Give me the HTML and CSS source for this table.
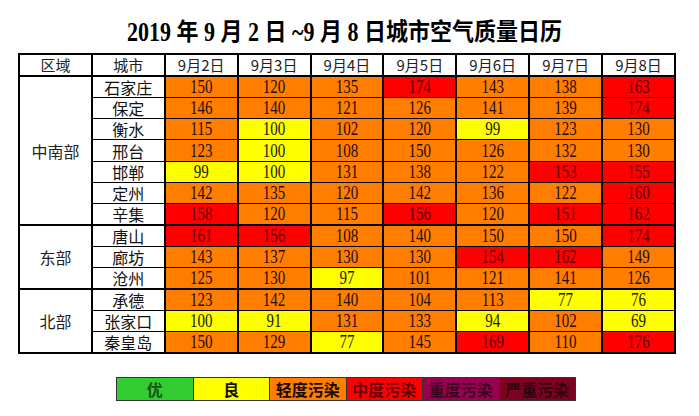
FILE: index.html
```html
<!DOCTYPE html>
<html lang="zh-CN">
<head>
<meta charset="utf-8">
<title>2019年9月2日~9月8日城市空气质量日历</title>
<link rel="stylesheet" href="styles.css">
</head>
<body>
<h1 class="title"><span class="title-text"><span class="num">2019</span> 年 <span class="num">9</span> 月 <span class="num">2</span> 日 <span class="num">~9</span> 月 <span class="num">8</span> 日城市空气质量日历</span></h1>
<table class="aqi">
  <colgroup>
    <col><col><col><col><col><col><col><col><col>
  </colgroup>
  <thead>
    <tr class="head">
      <th>区域</th><th>城市</th><th>9月2日</th><th>9月3日</th><th>9月4日</th><th>9月5日</th><th>9月6日</th><th>9月7日</th><th>9月8日</th>
    </tr>
  </thead>
  <tbody class="group">
    <tr>
      <td class="region" rowspan="7">中南部</td><td class="city">石家庄</td>
      <td class="o"><span>150</span></td><td class="o"><span>120</span></td><td class="o"><span>135</span></td><td class="r"><span>174</span></td><td class="o"><span>143</span></td><td class="o"><span>138</span></td><td class="r"><span>163</span></td>
    </tr>
    <tr>
      <td class="city">保定</td>
      <td class="o"><span>146</span></td><td class="o"><span>140</span></td><td class="o"><span>121</span></td><td class="o"><span>126</span></td><td class="o"><span>141</span></td><td class="o"><span>139</span></td><td class="r"><span>174</span></td>
    </tr>
    <tr>
      <td class="city">衡水</td>
      <td class="o"><span>115</span></td><td class="y"><span>100</span></td><td class="o"><span>102</span></td><td class="o"><span>120</span></td><td class="y"><span>99</span></td><td class="o"><span>123</span></td><td class="o"><span>130</span></td>
    </tr>
    <tr>
      <td class="city">邢台</td>
      <td class="o"><span>123</span></td><td class="y"><span>100</span></td><td class="o"><span>108</span></td><td class="o"><span>150</span></td><td class="o"><span>126</span></td><td class="o"><span>132</span></td><td class="o"><span>130</span></td>
    </tr>
    <tr>
      <td class="city">邯郸</td>
      <td class="y"><span>99</span></td><td class="y"><span>100</span></td><td class="o"><span>131</span></td><td class="o"><span>138</span></td><td class="o"><span>122</span></td><td class="r"><span>153</span></td><td class="r"><span>155</span></td>
    </tr>
    <tr>
      <td class="city">定州</td>
      <td class="o"><span>142</span></td><td class="o"><span>135</span></td><td class="o"><span>120</span></td><td class="o"><span>142</span></td><td class="o"><span>136</span></td><td class="o"><span>122</span></td><td class="r"><span>160</span></td>
    </tr>
    <tr>
      <td class="city">辛集</td>
      <td class="r"><span>158</span></td><td class="o"><span>120</span></td><td class="o"><span>115</span></td><td class="r"><span>156</span></td><td class="o"><span>120</span></td><td class="r"><span>151</span></td><td class="r"><span>162</span></td>
    </tr>
  </tbody>
  <tbody class="group">
    <tr>
      <td class="region" rowspan="3">东部</td><td class="city">唐山</td>
      <td class="r"><span>161</span></td><td class="r"><span>156</span></td><td class="o"><span>108</span></td><td class="o"><span>140</span></td><td class="o"><span>150</span></td><td class="o"><span>150</span></td><td class="r"><span>174</span></td>
    </tr>
    <tr>
      <td class="city">廊坊</td>
      <td class="o"><span>143</span></td><td class="o"><span>137</span></td><td class="o"><span>130</span></td><td class="o"><span>130</span></td><td class="r"><span>154</span></td><td class="r"><span>162</span></td><td class="o"><span>149</span></td>
    </tr>
    <tr>
      <td class="city">沧州</td>
      <td class="o"><span>125</span></td><td class="o"><span>130</span></td><td class="y"><span>97</span></td><td class="o"><span>101</span></td><td class="o"><span>121</span></td><td class="o"><span>141</span></td><td class="o"><span>126</span></td>
    </tr>
  </tbody>
  <tbody class="group">
    <tr>
      <td class="region" rowspan="3">北部</td><td class="city">承德</td>
      <td class="o"><span>123</span></td><td class="o"><span>142</span></td><td class="o"><span>140</span></td><td class="o"><span>104</span></td><td class="o"><span>113</span></td><td class="y"><span>77</span></td><td class="y"><span>76</span></td>
    </tr>
    <tr>
      <td class="city">张家口</td>
      <td class="y"><span>100</span></td><td class="y"><span>91</span></td><td class="o"><span>131</span></td><td class="o"><span>133</span></td><td class="y"><span>94</span></td><td class="o"><span>102</span></td><td class="y"><span>69</span></td>
    </tr>
    <tr>
      <td class="city">秦皇岛</td>
      <td class="o"><span>150</span></td><td class="o"><span>129</span></td><td class="y"><span>77</span></td><td class="o"><span>145</span></td><td class="r"><span>169</span></td><td class="o"><span>110</span></td><td class="r"><span>176</span></td>
    </tr>
  </tbody>
</table>
<div class="legend">
  <div class="key k-good">优</div>
  <div class="key k-moderate">良</div>
  <div class="key k-light">轻度污染</div>
  <div class="key k-medium">中度污染</div>
  <div class="key k-heavy">重度污染</div>
  <div class="key k-severe">严重污染</div>
</div>
</body>
</html>
```
FILE: styles.css
```css
html, body {
  margin: 0;
  padding: 0;
  background: #ffffff;
}

body {
  width: 699px;
  height: 416px;
  overflow: hidden;
  font-family: "Noto Sans CJK SC", sans-serif;
  color: #111;
}

.title {
  margin: 0;
  height: 53px;
  box-sizing: border-box;
  padding: 19px 10px 0 0;
  text-align: center;
  font-family: "Liberation Serif", "Noto Sans CJK SC", serif;
  font-size: 22px;
  line-height: 26px;
  font-weight: 700;
  color: #000;
  white-space: pre;
}

.title-text {
  display: inline-block;
  transform: scaleY(1.1);
}

.title .num {
  display: inline-block;
  transform: scaleY(1.12);
}

.aqi {
  margin-left: 18px;
  width: 658px;
  table-layout: fixed;
  border-collapse: collapse;
  border: 2px solid #000;
}

.aqi th,
.aqi td {
  padding: 0;
  border: 1px solid #000;
  border-left-width: 2px;
  border-right-width: 2px;
  text-align: center;
  vertical-align: middle;
  white-space: nowrap;
}

.aqi .head {
  height: 22px;
}

.aqi th {
  font-weight: 400;
  font-size: 15px;
  line-height: 18px;
  color: #222;
  background: #fff;
}

.aqi tbody tr {
  height: 21.3px;
}

.group {
  border-top: 2px solid #000;
}

.region {
  font-size: 16px;
  line-height: 18px;
  color: #222;
  background: #fff;
}

.city {
  font-size: 16px;
  line-height: 18px;
  color: #111;
  background: #fff;
}

.o, .y, .r {
  font-family: "Liberation Serif", serif;
  font-size: 15px;
  line-height: 18px;
}

.o span, .y span, .r span {
  display: inline-block;
  transform: scaleY(1.2);
}

.o {
  background: #ff7e00;
  color: #1e0c00;
}

.y {
  background: #ffff00;
  color: #1a1a00;
}

.r {
  background: #ff0000;
  color: #5c0000;
}

.legend {
  display: flex;
  margin: 23px 0 0 116px;
  width: 460px;
  height: 24px;
  border: 1px solid #333;
  box-sizing: border-box;
}

.key {
  flex: 1 1 0;
  display: flex;
  align-items: center;
  justify-content: center;
  border-right: 1px solid #333;
  font-family: "Noto Sans CJK SC", sans-serif;
  font-weight: 700;
  font-size: 16px;
  color: rgba(0, 0, 0, 0.62);
}

.key:last-child {
  border-right: none;
}

.k-good { background: #33cc33; }
.k-moderate { background: #ffff00; color: #111; }
.k-light { background: #ff7e00; color: #1a0a00; }
.k-medium { background: #ff0000; }
.k-heavy { background: #990050; }
.k-severe { background: #7e0023; }
```
